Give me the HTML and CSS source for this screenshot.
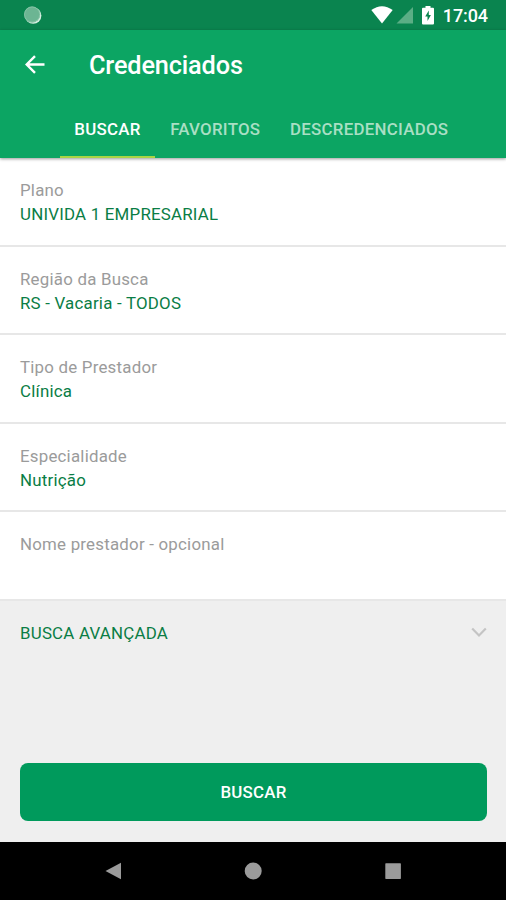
FILE: index.html
```html
<!DOCTYPE html>
<html lang="pt-BR">
<head>
<meta charset="utf-8">
<title>Credenciados</title>
<link rel="stylesheet" href="styles.css">
</head>
<body>
<div class="status">
  <svg class="sync" width="20" height="20" viewBox="0 0 20 20"><circle cx="10.2" cy="10.6" r="8.2" fill="#d5eee0"/><circle cx="9.1" cy="9.5" r="8" fill="#6cb593"/><circle cx="9.1" cy="9.5" r="7.6" fill="none" stroke="#8cc6aa" stroke-width=".8"/></svg>
  <div class="indicators">
    <svg width="22" height="18" viewBox="0 0 22 18"><path d="M.3 4.100Q11-3.700 21.700 4.100L11 17.600Z" fill="#fff"/></svg>
    <svg class="signal" width="18" height="18" viewBox="0 0 18 18"><path d="M17 1V17.500H.5Z" fill="#5bae85"/></svg>
    <svg class="battery" width="12" height="20" viewBox="0 0 12 20"><path d="M3.500 1h5v1.800H11q1 0 1 1v14.700q0 1-1 1H1q-1 0-1-1V3.800q0-1 1-1h2.500Z" fill="#fff"/><path d="M6.800 5.500 3.200 11.500h2.300V16L8.900 9.900H6.800Z" fill="#0a844f"/></svg>
    <span class="clock">17:04</span>
  </div>
</div>
<header class="appbar">
  <div class="titlebar">
    <svg class="back" width="22" height="20" viewBox="0 0 22 20"><path d="M20.500 9.500H3M11 1.200 2.700 9.500l8.300 8.300" fill="none" stroke="#fff" stroke-width="2.400"/></svg>
    <h1>Credenciados</h1>
  </div>
  <nav class="tabs">
    <span class="tab active">BUSCAR</span><span class="tab">FAVORITOS</span><span class="tab">DESCREDENCIADOS</span>
  </nav>
</header>
<main>
  <div class="field"><span class="label">Plano</span><span class="value">UNIVIDA 1 EMPRESARIAL</span></div>
  <div class="field"><span class="label">Região da Busca</span><span class="value">RS - Vacaria - TODOS</span></div>
  <div class="field"><span class="label">Tipo de Prestador</span><span class="value">Clínica</span></div>
  <div class="field"><span class="label">Especialidade</span><span class="value">Nutrição</span></div>
  <div class="field"><span class="label">Nome prestador - opcional</span></div>
  <div class="advanced"><span>BUSCA AVANÇADA</span>
    <svg width="16" height="11" viewBox="0 0 16 11"><path d="M1.200 1.500 8 8.500l6.800-7" fill="none" stroke="#c4c4c4" stroke-width="2.200"/></svg>
  </div>
  <button class="search">BUSCAR</button>
</main>
<footer class="navbar">
  <svg width="18" height="20" viewBox="0 0 18 20"><path d="M17 1.700v16.600L1.500 10Z" fill="#9b9b9b"/></svg>
  <svg width="18" height="20" viewBox="0 0 18 20"><circle cx="9.200" cy="10" r="8.500" fill="#9b9b9b"/></svg>
  <svg width="18" height="20" viewBox="0 0 18 20"><rect x="1.300" y="2.300" width="15.600" height="15.600" rx=".6" fill="#9b9b9b"/></svg>
</footer>
</body>
</html>
```
FILE: styles.css
```css
* { box-sizing: border-box; }
body {
  margin: 0;
  height: 900px;
  display: flex;
  flex-direction: column;
  font-family: Roboto, sans-serif;
  font-size: 16.87px;
  letter-spacing: .22px;
  background: #efefef;
  overflow: hidden;
}
.status {
  height: 30px;
  flex: none;
  display: flex;
  justify-content: space-between;
  align-items: center;
  padding: 0 18px 0 23px;
  background: #0a844f;
}
.indicators { display: flex; align-items: center; }
.signal { margin-left: 3px; }
.battery { margin-left: 8px; }
.clock {
  margin-left: 9px;
  color: #fff;
  font-size: 18px;
  font-weight: 500;
  letter-spacing: -.1px;
  line-height: 30px;
  padding-top: 2px;
}
.appbar {
  height: 128px;
  flex: none;
  display: flex;
  flex-direction: column;
  justify-content: space-between;
  background: #0ca563;
  box-shadow: 0 1px 3px rgba(0, 0, 0, .4);
  z-index: 1;
}
.titlebar { height: 70px; display: flex; align-items: center; padding-left: 24px; }
h1 {
  margin: 0 0 0 43px;
  color: #fff;
  font-size: 25.3px;
  font-weight: 500;
  letter-spacing: -.15px;
  line-height: 30px;
  padding-top: 1px;
}
.tabs { display: flex; padding-left: 59.5px; }
.tab {
  height: 58px;
  padding: 0 14.8px;
  line-height: 58px;
  font-weight: 500;
  letter-spacing: .27px;
  color: #a9dfc4;
}
.active { color: #fff; border-bottom: 2.5px solid #a9d544; }
main { height: 684px; flex: none; }
.field {
  height: 88.6px;
  display: flex;
  flex-direction: column;
  padding: 20px 20px 0;
  line-height: 24px;
  background: #fff;
  border-bottom: 2px solid #e7e7e7;
}
.label { color: #9b9b9b; }
.value, .advanced { color: #0a7d45; }
.advanced {
  height: 64px;
  display: flex;
  align-items: center;
  justify-content: space-between;
  padding: 0 19px 0 20px;
}
.search {
  display: block;
  width: 467px;
  height: 58px;
  margin: 98px 0 0 20px;
  padding: 1px 0 0;
  border: 0;
  border-radius: 8px;
  background: #009a5c;
  color: #fff;
  font: 500 16.87px Roboto, sans-serif;
  letter-spacing: .25px;
}
.navbar {
  flex: 1;
  display: flex;
  align-items: center;
  justify-content: center;
  gap: 122px;
  background: #000;
}
```
